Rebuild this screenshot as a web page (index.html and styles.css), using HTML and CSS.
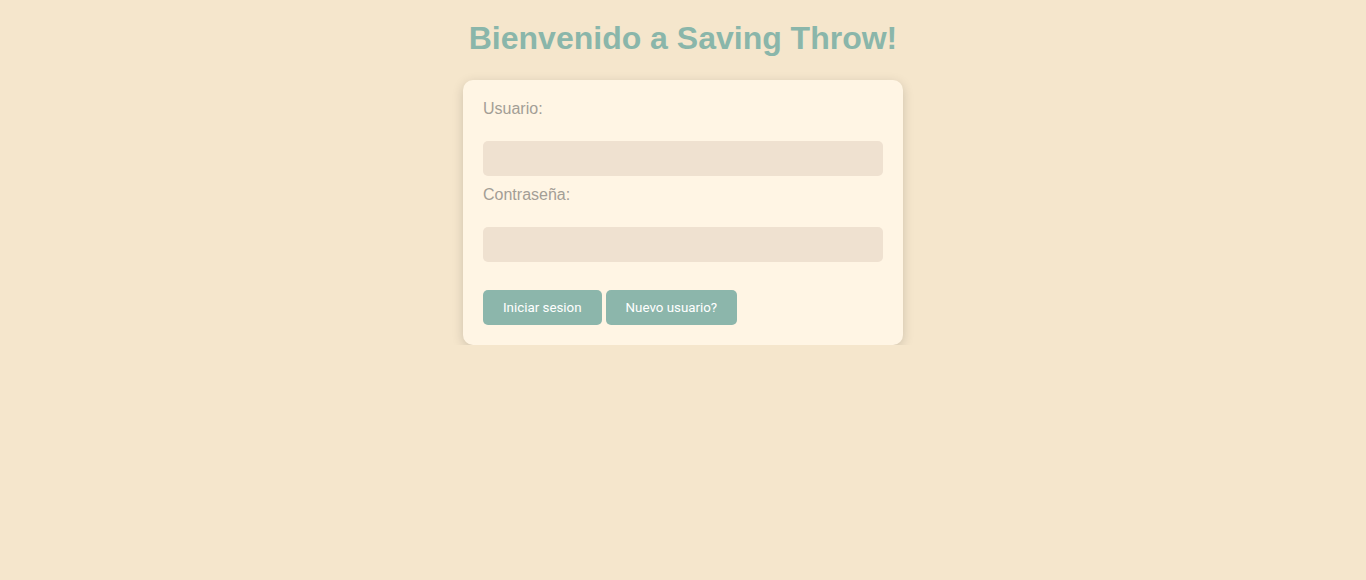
FILE: index.html
```html
<!DOCTYPE html>
<html lang="es">
<head>
<meta charset="utf-8">
<title>Saving Throw</title>
<link rel="stylesheet" href="styles.css">
</head>
<body>
<h1 class="title">Bienvenido a Saving Throw!</h1>
<form class="card">
  <label class="label" for="user">Usuario:</label>
  <input class="field field-first" id="user" type="text">
  <label class="label" for="pass">Contraseña:</label>
  <input class="field" id="pass" type="password">
  <div class="actions">
    <button class="btn" type="button">Iniciar sesion</button>
    <button class="btn" type="button">Nuevo usuario?</button>
  </div>
</form>
</body>
</html>
```

FILE: styles.css
```css
html, body {
  margin: 0;
  padding: 0;
}
body {
  background: #f5e6cc;
  font-family: "Liberation Sans", Arial, sans-serif;
  padding-top: 1px;
}
.title {
  margin: 19px 0 23px;
  text-align: center;
  font-size: 32px;
  line-height: 37px;
  font-weight: bold;
  color: #8ab6aa;
}
.card {
  box-sizing: border-box;
  width: 440px;
  margin: 0 auto;
  padding: 20px;
  background: #fff5e4;
  border-radius: 10px;
  box-shadow: 0 3px 12px rgba(0, 0, 0, 0.16);
}
.label {
  display: block;
  font-size: 16px;
  line-height: 18px;
  color: #a39e96;
  margin-bottom: 23px;
}
.field {
  display: block;
  box-sizing: border-box;
  width: 100%;
  height: 35px;
  border: none;
  border-radius: 5px;
  background: #efe1d0;
  margin: 0;
  padding: 0 10px;
  outline: none;
}
.field-first {
  margin-bottom: 10px;
}
.actions {
  display: flex;
  gap: 4px;
  margin-top: 28px;
}
.btn {
  height: 35px;
  padding: 0 20px;
  border: none;
  border-radius: 5px;
  background: #8cb6ab;
  color: #ffffff;
  font-family: Roboto, "Liberation Sans", Arial, sans-serif;
  font-weight: 400;
  font-size: 13.33px;
  cursor: pointer;
}
```
